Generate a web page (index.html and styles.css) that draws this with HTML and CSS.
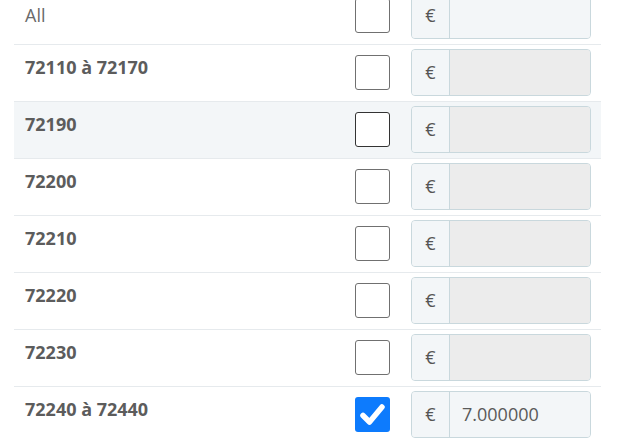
FILE: index.html
```html
<!DOCTYPE html>
<html>
<head>
<meta charset="utf-8">
<link rel="stylesheet" href="styles.css">
</head>
<body>
<div class="table">
  <div class="row row-first">
    <div class="label label-all">All</div>
    <div class="check"></div>
    <div class="igroup"><span class="prepend">€</span><span class="field"></span></div>
  </div>
  <div class="row">
    <div class="label">72110 à 72170</div>
    <div class="check"></div>
    <div class="igroup"><span class="prepend">€</span><span class="field disabled"></span></div>
  </div>
  <div class="row row-hover">
    <div class="label">72190</div>
    <div class="check check-hover"></div>
    <div class="igroup"><span class="prepend">€</span><span class="field disabled"></span></div>
  </div>
  <div class="row">
    <div class="label">72200</div>
    <div class="check"></div>
    <div class="igroup"><span class="prepend">€</span><span class="field disabled"></span></div>
  </div>
  <div class="row">
    <div class="label">72210</div>
    <div class="check"></div>
    <div class="igroup"><span class="prepend">€</span><span class="field disabled"></span></div>
  </div>
  <div class="row">
    <div class="label">72220</div>
    <div class="check"></div>
    <div class="igroup"><span class="prepend">€</span><span class="field disabled"></span></div>
  </div>
  <div class="row">
    <div class="label">72230</div>
    <div class="check"></div>
    <div class="igroup"><span class="prepend">€</span><span class="field disabled"></span></div>
  </div>
  <div class="row">
    <div class="label">72240 à 72440</div>
    <div class="check checked"><svg viewBox="0 0 35 35" width="35" height="35"><polyline points="8,18.5 14.5,25 27,10" fill="none" stroke="#fff" stroke-width="5.5" stroke-linecap="round" stroke-linejoin="round"/></svg></div>
    <div class="igroup"><span class="prepend">€</span><span class="field">7.000000</span></div>
  </div>
</div>
</body>
</html>
```

FILE: styles.css
```css
html, body {
  margin: 0;
  padding: 0;
  background: #fff;
  overflow: hidden;
}
body {
  font-family: "Open Sans", "Liberation Sans", sans-serif;
  font-size: 18px;
  line-height: 27px;
  color: #5b5b5b;
}
.table {
  width: 587px;
  margin: -13px 0 0 14px;
}
.row {
  display: grid;
  grid-template-columns: 1fr 35px 180px;
  column-gap: 21px;
  align-items: center;
  height: 55px;
  padding: 0 10px 1px 11px;
  border-top: 1px solid #e6eaed;
}
.row-first {
  border-top: none;
  height: 56px;
}
.row-hover {
  background: #f3f6f8;
}
.label {
  align-self: start;
  padding-top: 9px;
  font-weight: 700;
  color: #5c5c5c;
}
.label-all {
  align-self: center;
  padding-top: 0;
  font-weight: 400;
  color: #6a6a6a;
}
.check {
  width: 35px;
  height: 35px;
  box-sizing: border-box;
  border: 1px solid #707070;
  border-radius: 3px;
  background: #fff;
}
.check-hover {
  border-color: #333;
}
.checked {
  border: none;
  background: #0d7bfd;
}
.checked svg {
  display: block;
}
.igroup {
  display: flex;
  height: 47px;
  box-sizing: border-box;
  border: 1px solid #c9d8dd;
  border-radius: 4px;
  overflow: hidden;
  background: #f3f6f8;
}
.prepend {
  width: 37px;
  flex: none;
  border-right: 1px solid #c9d8dd;
  display: flex;
  align-items: center;
  justify-content: center;
  color: #555;
  background: #f3f6f8;
}
.field {
  flex: 1;
  display: flex;
  align-items: center;
  padding-left: 12px;
  color: #5a5a5a;
  background: #f3f6f8;
}
.field.disabled {
  background: #ececec;
}
```
